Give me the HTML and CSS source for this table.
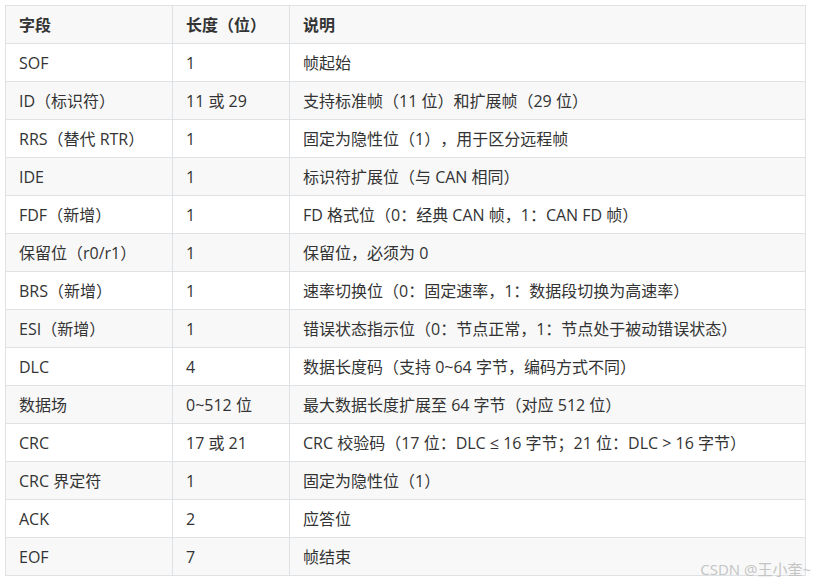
FILE: index.html
```html
<!DOCTYPE html>
<html lang="zh">
<head>
<meta charset="utf-8">
<link rel="stylesheet" href="styles.css">
</head>
<body>
<div class="page">
<table class="spec">
<colgroup><col class="c1"><col class="c2"><col class="c3"></colgroup>
<thead>
<tr><th>字段</th><th>长度（位）</th><th>说明</th></tr>
</thead>
<tbody>
<tr><td>SOF</td><td>1</td><td>帧起始</td></tr>
<tr><td>ID（标识符）</td><td>11 或 29</td><td>支持标准帧（11 位）和扩展帧（29 位）</td></tr>
<tr><td>RRS（替代 RTR）</td><td>1</td><td>固定为隐性位（1），用于区分远程帧</td></tr>
<tr><td>IDE</td><td>1</td><td>标识符扩展位（与 CAN 相同）</td></tr>
<tr><td>FDF（新增）</td><td>1</td><td>FD 格式位（0：经典 CAN 帧，1：CAN FD 帧）</td></tr>
<tr><td>保留位（r0/r1）</td><td>1</td><td>保留位，必须为 0</td></tr>
<tr><td>BRS（新增）</td><td>1</td><td>速率切换位（0：固定速率，1：数据段切换为高速率）</td></tr>
<tr><td>ESI（新增）</td><td>1</td><td>错误状态指示位（0：节点正常，1：节点处于被动错误状态）</td></tr>
<tr><td>DLC</td><td>4</td><td>数据长度码（支持 0~64 字节，编码方式不同）</td></tr>
<tr><td>数据场</td><td>0~512 位</td><td>最大数据长度扩展至 64 字节（对应 512 位）</td></tr>
<tr><td>CRC</td><td>17 或 21</td><td>CRC 校验码（17 位：DLC ≤ 16 字节；21 位：DLC &gt; 16 字节）</td></tr>
<tr><td>CRC 界定符</td><td>1</td><td>固定为隐性位（1）</td></tr>
<tr><td>ACK</td><td>2</td><td>应答位</td></tr>
<tr><td>EOF</td><td>7</td><td>帧结束</td></tr>
</tbody>
</table>
<div class="watermark">CSDN @王小奎~</div>
</div>
</body>
</html>
```
FILE: styles.css
```css
html, body {
  margin: 0;
  padding: 0;
  background: #ffffff;
}
.page {
  position: relative;
  width: 821px;
  height: 586px;
  padding: 5px 0 0 5px;
  box-sizing: border-box;
  font-family: "Open Sans", "Noto Sans CJK SC", sans-serif;
  color: #333333;
}
.spec {
  border-collapse: collapse;
  table-layout: fixed;
  width: 800px;
  font-size: 16px;
  text-spacing-trim: space-all;
}
.c1 { width: 167px; }
.c2 { width: 117px; }
.c3 { width: 516px; }
.spec th, .spec td {
  border: 1px solid #dfe2e5;
  height: 38px;
  padding: 0 13px;
  text-align: left;
  vertical-align: middle;
  white-space: nowrap;
  box-sizing: border-box;
  line-height: 20px;
}
.spec th {
  font-weight: 700;
  background: #f8f8f8;
}
.spec tbody tr:nth-child(even) td {
  background: #f8f8f8;
}
.spec tbody tr:nth-child(odd) td {
  background: #ffffff;
}
.watermark {
  position: absolute;
  right: 10px;
  top: 560px;
  font-size: 15px;
  color: #c4c4c4;
  line-height: 18px;
}
```
